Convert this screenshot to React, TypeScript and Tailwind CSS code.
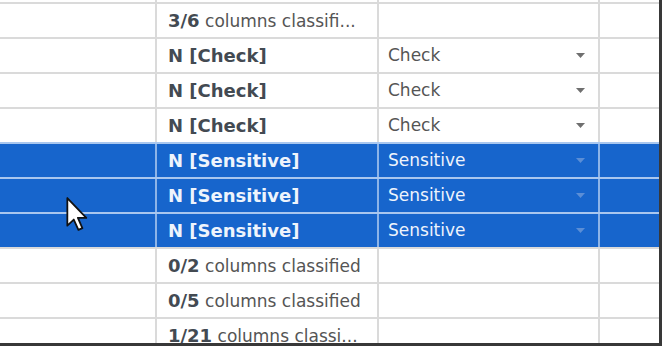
import React from "react";

type Row = {
  kind: "summary" | "check" | "sensitive";
  bold: string;
  rest?: string;
};

const rows: Row[] = [
  { kind: "summary", bold: "3/6", rest: " columns classifi..." },
  { kind: "check", bold: "N [Check]" },
  { kind: "check", bold: "N [Check]" },
  { kind: "check", bold: "N [Check]" },
  { kind: "sensitive", bold: "N [Sensitive]" },
  { kind: "sensitive", bold: "N [Sensitive]" },
  { kind: "sensitive", bold: "N [Sensitive]" },
  { kind: "summary", bold: "0/2", rest: " columns classified" },
  { kind: "summary", bold: "0/5", rest: " columns classified" },
  { kind: "summary", bold: "1/21", rest: " columns classi..." },
];

// little dropdown triangle
const Arrow = ({ selected }: { selected: boolean }) => (
  <svg width="9" height="5" viewBox="0 0 9 5" className="shrink-0">
    <path d="M0 0 L9 0 L4.5 5 Z" fill={selected ? "#5b8ed6" : "#6f6f6f"} />
  </svg>
);

const GridRow = ({ row }: { row: Row }) => {
  const sel = row.kind === "sensitive";
  const lineH = sel ? "border-[#a9c7ef]" : "border-[#dadada]";
  const lineV = sel ? "border-[#8db4e8]" : "border-[#dadada]";
  return (
    <div
      className={`flex h-[35px] border-t-2 ${lineH} ${
        sel ? "bg-[#1765cc]" : "bg-white"
      }`}
    >
      <div className="w-[155px] shrink-0" />
      <div
        className={`w-[222px] shrink-0 border-l-2 ${lineV} pl-[11px] flex items-center overflow-hidden text-[17px]`}
      >
        <span className="whitespace-pre">
          <span
            className={`font-bold text-[18px] ${
              sel ? "text-[#eef4fc]" : "text-[#434a52]"
            }`}
          >
            {row.bold}
          </span>
          {row.rest && <span className="text-[#555555]">{row.rest}</span>}
        </span>
      </div>
      <div
        className={`w-[221px] shrink-0 border-l-2 ${lineV} pl-[9px] pr-[13px] flex items-center justify-between text-[17px]`}
      >
        {row.kind === "check" && (
          <>
            <span className="text-[#555555]">Check</span>
            <Arrow selected={false} />
          </>
        )}
        {sel && (
          <>
            <span className="text-[#eef4fc]">Sensitive</span>
            <Arrow selected={true} />
          </>
        )}
      </div>
      <div className={`flex-1 border-l-2 ${lineV}`} />
    </div>
  );
};

export default function App() {
  return (
    <div
      className="w-[664px] h-[348px] bg-white relative overflow-hidden"
      style={{ fontFamily: '"DejaVu Sans", Tahoma, sans-serif' }}
    >
      <div className="w-[662px] h-[346px] border-r-[3px] border-b-[3px] border-[#383838] overflow-hidden">
        {/* cut off row above */}
        <div className="flex h-[2px] bg-white">
          <div className="w-[155px] shrink-0" />
          <div className="w-[222px] shrink-0 border-l-2 border-[#dadada]" />
          <div className="w-[221px] shrink-0 border-l-2 border-[#dadada]" />
          <div className="flex-1 border-l-2 border-[#dadada]" />
        </div>
        {rows.map((r, i) => (
          <GridRow key={i} row={r} />
        ))}
      </div>
      {/* mouse pointer */}
      <svg
        width="22"
        height="34"
        viewBox="0 0 12 19"
        className="absolute left-[66px] top-[197px]"
      >
        <path
          d="M0.6 0.6 L0.6 16 L4.2 12.6 L6.8 18.4 L9 17.4 L6.5 11.7 L11.2 11.7 Z"
          fill="#ffffff"
          stroke="#111111"
          strokeWidth="1"
          strokeLinejoin="round"
        />
      </svg>
    </div>
  );
}
